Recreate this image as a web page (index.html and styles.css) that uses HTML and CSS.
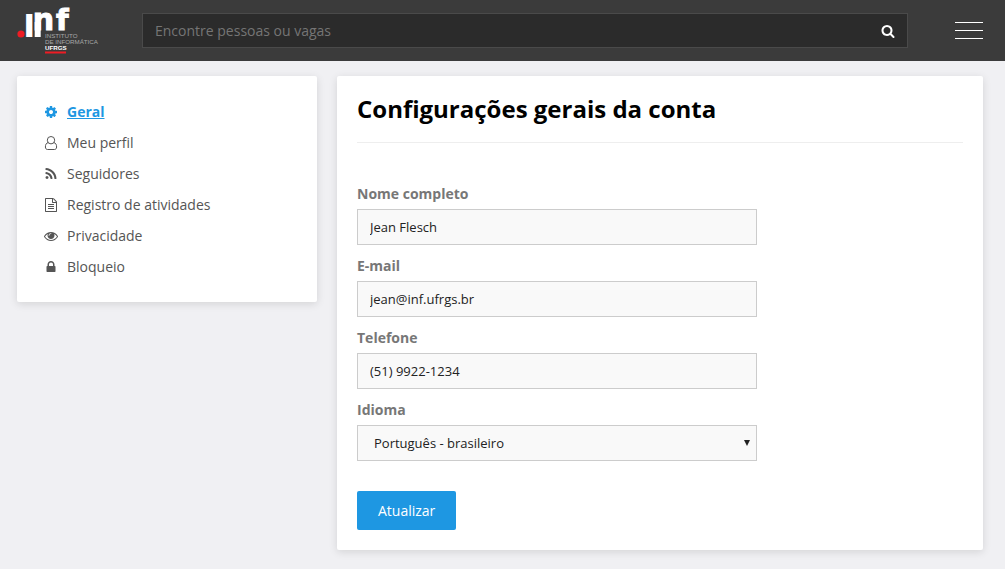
FILE: index.html
```html
<!DOCTYPE html>
<html lang="pt-BR">
<head>
<meta charset="utf-8">
<meta name="viewport" content="width=device-width, initial-scale=1">
<title>Configurações gerais da conta</title>
<link rel="stylesheet" href="styles.css">
</head>
<body>
<header class="topbar">
  <a class="brand" href="#" aria-label="Instituto de Informática UFRGS">
    <svg class="logo" viewBox="0 0 84 48" width="84" height="48">
      <circle cx="4" cy="27" r="3.6" fill="#ed1c24"/>
      <g fill="#fff" font-family="DejaVu Sans, sans-serif" font-weight="700">
        <text x="6.500" y="30" font-size="42" font-family="Inter, sans-serif">ı</text>
        <text x="15.700" y="22.500" font-size="30" stroke="#fff" stroke-width="1">n</text>
        <rect x="17.700" y="15" width="6" height="15"/>
        <text x="39" y="22.500" font-size="29" stroke="#fff" stroke-width="1">f</text>
      </g>
      <g font-family="Liberation Sans, sans-serif" font-size="6.200">
        <text x="28" y="30.500" fill="#a8a8a8">INSTITUTO</text>
        <text x="28" y="36.500" fill="#a8a8a8">DE INFORMÁTICA</text>
        <text x="28" y="42.500" fill="#fff" font-weight="700">UFRGS</text>
      </g>
      <rect x="28" y="44.500" width="21" height="2" fill="#ed1c24"/>
    </svg>
  </a>
  <form class="search" role="search">
    <input class="search-input" type="search" placeholder="Encontre pessoas ou vagas" aria-label="Encontre pessoas ou vagas">
    <button class="search-button" type="button" aria-label="Buscar">
      <svg class="icon" viewBox="0 0 1792 1792"><path d="M1216 832q0-185-131.500-316.500t-316.500-131.500-316.500 131.500-131.500 316.500 131.500 316.500 316.500 131.500 316.500-131.500 131.500-316.500zm512 832q0 52-38 90t-90 38q-54 0-90-38l-343-342q-179 124-399 124-143 0-273.500-55.500t-225-150-150-225-55.500-273.500 55.500-273.500 150-225 225-150 273.500-55.500 273.500 55.500 225 150 150 225 55.500 273.500q0 220-124 399l343 343q37 37 37 90z"/></svg>
    </button>
  </form>
  <button class="menu-button" type="button" aria-label="Menu">
    <span class="menu-line"></span><span class="menu-line"></span><span class="menu-line"></span>
  </button>
</header>
<div class="page">
  <nav class="card sidebar" aria-label="Configurações">
    <ul class="nav-list">
      <li><a class="nav-link active" href="#" aria-current="page"><svg class="icon" viewBox="0 0 1792 1792"><path d="M1152 896q0-106-75-181t-181-75-181 75-75 181 75 181 181 75 181-75 75-181zm512-109v222q0 12-8 23t-20 13l-185 28q-19 54-39 91 35 50 107 138 10 12 10 25t-9 23q-27 37-99 108t-94 71q-12 0-26-9l-138-108q-44 23-91 38-16 136-29 186-7 28-36 28h-222q-14 0-24.500-8.500t-11.500-21.500l-28-184q-49-16-90-37l-141 107q-10 9-25 9-14 0-25-11-126-114-165-168-7-10-7-23 0-12 8-23 15-21 51-66.500t54-70.500q-27-50-41-99l-183-27q-13-2-21-12.500t-8-23.500v-222q0-12 8-23t19-13l186-28q14-46 39-92-40-57-107-138-10-12-10-24 0-10 9-23 26-36 98.500-107.500t94.500-71.500q13 0 26 10l138 107q44-23 91-38 16-136 29-186 7-28 36-28h222q14 0 24.500 8.500t11.500 21.500l28 184q49 16 90 37l142-107q9-9 24-9 13 0 25 10 129 119 165 170 7 8 7 22 0 12-8 23-15 21-51 66.500t-54 70.500q26 50 41 98l183 28q13 2 21 12.500t8 23.500z"/></svg><span class="nav-text">Geral</span></a></li>
      <li><a class="nav-link" href="#"><svg class="icon" viewBox="0 0 14 14"><path fill="none" stroke="currentColor" d="M4.300 6.500C2.200 7 1.400 8.700 1.400 11c0 1.500.8 2.500 2.200 2.500h6.800c1.400 0 2.200-1 2.200-2.500 0-2.300-.8-4-2.900-4.500M7 .5a3.700 3.700 0 0 1 0 7.400 3.700 3.700 0 0 1 0-7.400z"/></svg><span class="nav-text">Meu perfil</span></a></li>
      <li><a class="nav-link" href="#"><svg class="icon" viewBox="0 0 1792 1792"><path d="M576 1344q0 80-56 136t-136 56-136-56-56-136 56-136 136-56 136 56 56 136zm512 123q2 28-17 48-18 21-47 21h-135q-25 0-43-16.500t-20-41.500q-22-229-184.500-391.500t-391.500-184.500q-25-2-41.500-20t-16.500-43v-135q0-29 21-47 17-17 43-17h5q160 13 306 80.500t259 181.500q114 113 181.500 259t80.500 306zm512 2q2 27-18 47-18 20-46 20h-143q-26 0-44.500-17.500t-19.500-42.500q-12-215-101-408.500t-231.500-336-336-231.500-408.500-102q-25-1-42.500-19.500t-17.500-43.500v-143q0-28 20-46 18-18 44-18h3q262 13 501.500 120t425.500 294q187 186 294 425.500t120 501.500z"/></svg><span class="nav-text">Seguidores</span></a></li>
      <li><a class="nav-link" href="#"><svg class="icon" viewBox="0 0 1792 1792"><path d="M1596 380q28 28 48 76t20 88v1152q0 40-28 68t-68 28h-1344q-40 0-68-28t-28-68v-1600q0-40 28-68t68-28h896q40 0 88 20t76 48zm-444-244v376h376q-10-29-22-41l-313-313q-12-12-41-22zm384 1528v-1024h-416q-40 0-68-28t-28-68v-416h-768v1536h1280zm-1024-864q0-14 9-23t23-9h704q14 0 23 9t9 23v64q0 14-9 23t-23 9h-704q-14 0-23-9t-9-23v-64zm736 224q14 0 23 9t9 23v64q0 14-9 23t-23 9h-704q-14 0-23-9t-9-23v-64q0-14 9-23t23-9h704zm0 256q14 0 23 9t9 23v64q0 14-9 23t-23 9h-704q-14 0-23-9t-9-23v-64q0-14 9-23t23-9h704z"/></svg><span class="nav-text">Registro de atividades</span></a></li>
      <li><a class="nav-link" href="#"><svg class="icon" viewBox="0 0 1792 1792"><path d="M1664 960q-152-236-381-353 61 104 61 225 0 185-131.500 316.500t-316.500 131.500-316.500-131.500-131.500-316.500q0-121 61-225-229 117-381 353 133 205 333.500 326.500t434.500 121.500 434.500-121.500 333.500-326.500zm-720-384q0-20-14-34t-34-14q-125 0-214.500 89.500t-89.500 214.500q0 20 14 34t34 14 34-14 14-34q0-86 61-147t147-61q20 0 34-14t14-34zm848 384q0 34-20 69-140 230-376.500 368.500t-499.500 138.500-499.500-139-376.500-368q-20-35-20-69t20-69q140-229 376.500-368t499.500-139 499.500 139 376.500 368q20 35 20 69z"/></svg><span class="nav-text">Privacidade</span></a></li>
      <li><a class="nav-link" href="#"><svg class="icon" viewBox="0 0 1792 1792"><path d="M640 768h512v-192q0-106-75-181t-181-75-181 75-75 181v192zm832 96v576q0 40-28 68t-68 28h-960q-40 0-68-28t-28-68v-576q0-40 28-68t68-28h32v-192q0-184 132-316t316-132 316 132 132 316v192h32q40 0 68 28t28 68z"/></svg><span class="nav-text">Bloqueio</span></a></li>
    </ul>
  </nav>
  <main class="card content">
    <h1 class="title">Configurações gerais da conta</h1>
    <form class="settings">
      <div class="field"><label for="nome">Nome completo</label><input class="control" id="nome" type="text" value="Jean Flesch"></div>
      <div class="field"><label for="email">E-mail</label><input class="control" id="email" type="email" value="jean@inf.ufrgs.br"></div>
      <div class="field"><label for="telefone">Telefone</label><input class="control" id="telefone" type="tel" value="(51) 9922-1234"></div>
      <div class="field"><label for="idioma">Idioma</label>
        <div class="select-wrap">
          <select class="control select" id="idioma"><option>Português - brasileiro</option></select>
          <svg class="caret" viewBox="0 0 6 6" width="6" height="6"><path d="M0 0h6L3 6z"/></svg>
        </div>
      </div>
      <button class="submit" type="button">Atualizar</button>
    </form>
  </main>
</div>
</body>
</html>
```

FILE: styles.css
```css
* {
  box-sizing: border-box;
}

body {
  margin: 0;
  background: #f0f0f3;
  color: #555;
  font: 14px/21px "Open Sans", "Noto Sans", sans-serif;
}

button,
input,
select {
  font: inherit;
  border-radius: 0;
}

.icon {
  display: block;
  width: 14px;
  height: 14px;
  flex: none;
  fill: currentColor;
}

.topbar {
  display: flex;
  align-items: center;
  height: 61px;
  padding: 0 22px 0 17px;
  background: #3b3b3b;
}

.brand {
  flex: none;
  width: 125px;
}

.logo {
  display: block;
  overflow: visible;
}

.search {
  display: flex;
  flex: 1;
  height: 35px;
  background: #2b2b2b;
  border: 1px solid #4a4a4a;
}

.search-input {
  flex: 1;
  min-width: 0;
  padding: 0 12px;
  color: #ddd;
  background: none;
  border: 0;
  outline: 0;
}

.search-input::placeholder {
  color: #757575;
}

.search-button {
  display: flex;
  align-items: center;
  padding: 0 12px;
  color: #fff;
  background: none;
  border: 0;
}

.menu-button {
  display: flex;
  flex-direction: column;
  gap: 7px;
  width: 28px;
  margin-left: 47px;
  padding: 0;
  background: none;
  border: 0;
}

.menu-line {
  width: 100%;
  height: 1px;
  background: #fff;
}

.page {
  display: flex;
  align-items: flex-start;
  gap: 20px;
  padding: 15px 22px 19px 17px;
}

.card {
  padding: 20px;
  background: #fff;
  border-radius: 2px;
  box-shadow: 0 2px 8px rgba(0, 0, 0, 0.12);
}

.sidebar {
  flex: none;
  width: 300px;
}

.nav-list {
  margin: 0;
  padding: 0;
  list-style: none;
}

.nav-link {
  display: flex;
  align-items: center;
  gap: 9px;
  height: 31px;
  padding: 0 7px;
  color: #555;
  text-decoration: none;
}

.nav-link.active {
  color: #1e97e2;
  font-weight: 700;
}

.active .nav-text {
  text-decoration: underline;
}

.content {
  flex: 1;
  min-width: 0;
}

.title {
  margin: 0 0 40px;
  padding-bottom: 21px;
  color: #000;
  font-size: 24px;
  font-weight: 700;
  line-height: 25px;
  border-bottom: 1px solid #eee;
}

.settings {
  display: flex;
  flex-direction: column;
  align-items: flex-start;
  gap: 10px;
}

.field {
  display: flex;
  flex-direction: column;
  gap: 5px;
  width: 100%;
  max-width: 400px;
}

.field label {
  color: #777;
  font-weight: 700;
}

.control {
  width: 100%;
  height: 36px;
  padding: 0 12px;
  color: #222;
  background: #f9f9f9;
  border: 1px solid #ccc;
  font-size: 13px;
}

.select-wrap {
  position: relative;
}

.select {
  display: block;
  padding: 0 16px;
  appearance: none;
}

.caret {
  position: absolute;
  top: 15px;
  right: 7px;
  fill: #222;
  pointer-events: none;
}

.submit {
  height: 39px;
  margin-top: 20px;
  padding: 0 21px;
  color: #fff;
  background: #1e97e2;
  border: 0;
  border-radius: 2px;
}
```
